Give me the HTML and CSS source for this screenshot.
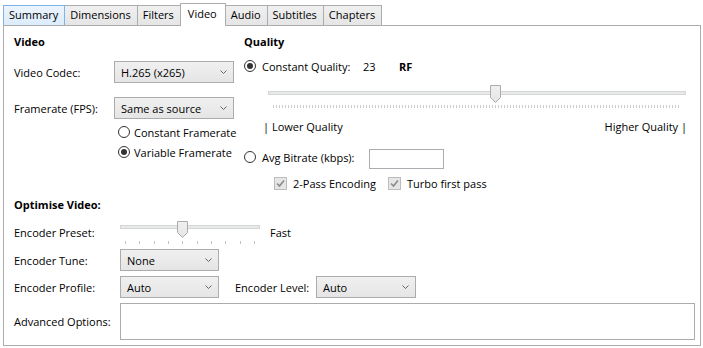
FILE: index.html
```html
<!DOCTYPE html>
<html>
<head>
<meta charset="utf-8">
<link rel="stylesheet" href="styles.css">
</head>
<body>
<div class="tabs">
  <div class="tab hover">Summary</div>
  <div class="tab">Dimensions</div>
  <div class="tab">Filters</div>
  <div class="tab active">Video</div>
  <div class="tab">Audio</div>
  <div class="tab">Subtitles</div>
  <div class="tab">Chapters</div>
</div>
<div class="panel">
  <div class="upper">
    <div class="col-video">
      <div class="heading">Video</div>
      <div class="field-row codec-row">
        <span class="lbl">Video Codec:</span>
        <div class="select w120"><span>H.265 (x265)</span><svg class="chev" width="7" height="4" viewBox="0 0 7 4"><polyline points="0.5,0.5 3.5,3.5 6.5,0.5" fill="none" stroke="#666" stroke-width="1"/></svg></div>
      </div>
      <div class="field-row fps-row">
        <span class="lbl">Framerate (FPS):</span>
        <div class="select w120"><span>Same as source</span><svg class="chev" width="7" height="4" viewBox="0 0 7 4"><polyline points="0.5,0.5 3.5,3.5 6.5,0.5" fill="none" stroke="#666" stroke-width="1"/></svg></div>
      </div>
      <div class="radio-row fr-first"><span class="radio"></span><span class="rtext-s">Constant Framerate</span></div>
      <div class="radio-row"><span class="radio on"></span><span class="rtext-s">Variable Framerate</span></div>
    </div>
    <div class="col-quality">
      <div class="heading">Quality</div>
      <div class="cq-row">
        <span class="radio on"></span><span class="rtext cq-label">Constant Quality:</span><span class="cq-val">23</span><span class="rf">RF</span>
      </div>
      <div class="slider q-slider">
        <div class="track"></div>
        <svg class="thumb q-thumb" width="11" height="18" viewBox="0 0 11 18"><defs><linearGradient id="tg" x1="0" y1="0" x2="0" y2="1"><stop offset="0" stop-color="#f0f0f0"/><stop offset="1" stop-color="#e5e5e5"/></linearGradient></defs><path d="M0.5 0.5 H10.5 V12.5 L5.5 17.5 L0.5 12.5 Z" fill="url(#tg)" stroke="#acacac"/></svg>
      </div>
      <div class="q-ticks"></div>
      <div class="q-labels"><span>| Lower Quality</span><span>Higher Quality |</span></div>
      <div class="ab-row">
        <span class="radio"></span><span class="rtext ab-label">Avg Bitrate (kbps):</span><span class="input"></span>
      </div>
      <div class="check-row">
        <span class="check-item"><span class="check"><svg width="11" height="11" viewBox="0 0 11 11"><polyline points="2,5.5 4.5,8 9,2.5" fill="none" stroke="#8a8a8a" stroke-width="1.6"/></svg></span><span>2-Pass Encoding</span></span>
        <span class="check-item"><span class="check"><svg width="11" height="11" viewBox="0 0 11 11"><polyline points="2,5.5 4.5,8 9,2.5" fill="none" stroke="#8a8a8a" stroke-width="1.6"/></svg></span><span>Turbo first pass</span></span>
      </div>
    </div>
  </div>
  <div class="optimise">
    <div class="heading">Optimise Video:</div>
    <div class="opt-row preset-row">
      <span class="lbl2">Encoder Preset:</span>
      <div class="slider p-slider">
        <div class="track"></div>
        <svg class="thumb p-thumb" width="11" height="17" viewBox="0 0 11 17"><defs><linearGradient id="tg2" x1="0" y1="0" x2="0" y2="1"><stop offset="0" stop-color="#f0f0f0"/><stop offset="1" stop-color="#e5e5e5"/></linearGradient></defs><path d="M0.5 0.5 H10.5 V11.5 L5.5 16.5 L0.5 11.5 Z" fill="url(#tg2)" stroke="#acacac"/></svg>
        <div class="p-ticks"><i></i><i></i><i></i><i></i><i></i><i></i><i></i><i></i><i></i><i></i></div>
      </div>
      <span class="fast">Fast</span>
    </div>
    <div class="opt-row tune-row">
      <span class="lbl2">Encoder Tune:</span>
      <div class="select w99"><span>None</span><svg class="chev" width="7" height="4" viewBox="0 0 7 4"><polyline points="0.5,0.5 3.5,3.5 6.5,0.5" fill="none" stroke="#666" stroke-width="1"/></svg></div>
    </div>
    <div class="opt-row profile-row">
      <span class="lbl2">Encoder Profile:</span>
      <div class="select w99"><span>Auto</span><svg class="chev" width="7" height="4" viewBox="0 0 7 4"><polyline points="0.5,0.5 3.5,3.5 6.5,0.5" fill="none" stroke="#666" stroke-width="1"/></svg></div>
      <span class="lvl-label">Encoder Level:</span>
      <div class="select w100"><span>Auto</span><svg class="chev" width="7" height="4" viewBox="0 0 7 4"><polyline points="0.5,0.5 3.5,3.5 6.5,0.5" fill="none" stroke="#666" stroke-width="1"/></svg></div>
    </div>
    <div class="opt-row adv-row">
      <span class="lbl2">Advanced Options:</span>
      <div class="textarea"></div>
    </div>
  </div>
</div>
</body>
</html>
```
FILE: styles.css
```css
* { box-sizing: border-box; }
body {
  margin: 0;
  background: #fff;
  font-family: "Open Sans", "Noto Sans", sans-serif;
  font-size: 11px;
  color: #000;
}
.tabs {
  display: flex;
  align-items: flex-end;
  height: 25px;
  padding-left: 3px;
}
.tab {
  height: 20px;
  line-height: 18px;
  padding: 0 6px 0 5px;
  border: 1px solid #acacac;
  border-bottom: none;
  background: linear-gradient(#f0f0f0, #e5e5e5);
  margin-left: -1px;
  white-space: nowrap;
}
.tab:first-child { margin-left: 0; }
.tab.hover {
  background: linear-gradient(#ecf4fc, #dcecfc);
  border-color: #7eb4ea;
  position: relative;
  z-index: 1;
}
.tab.active {
  height: 23px;
  line-height: 20px;
  background: #fff;
  position: relative;
  z-index: 2;
  margin-bottom: -1px;
  padding: 0 8px 0 7px;
}
.panel {
  margin-left: 3px;
  width: 698px;
  height: 321px;
  border: 1px solid #acacac;
  padding: 8px 4px 0 10px;
}
.upper { display: flex; }
.col-video { width: 230px; }
.col-quality { flex: 1; }
.heading {
  font-weight: 700;
  height: 16px;
  line-height: 16px;
}
.field-row { display: flex; align-items: center; }
.codec-row { margin-top: 11px; }
.fps-row { margin-top: 14px; }
.lbl { width: 100px; }
.select {
  height: 22px;
  border: 1px solid #acacac;
  background: linear-gradient(#f0f0f0, #e5e5e5);
  display: flex;
  align-items: center;
  justify-content: space-between;
  padding: 0 6px 0 6px;
}
.w120 { width: 120px; }
.w99 { width: 99px; }
.w100 { width: 100px; }
.radio {
  width: 12px;
  height: 12px;
  border: 1px solid #333;
  border-radius: 50%;
  background: #fff;
  display: flex;
  align-items: center;
  justify-content: center;
  flex: none;
}
.radio.on::after {
  content: "";
  width: 6px;
  height: 6px;
  border-radius: 50%;
  background: #333;
}
.rtext { margin-left: 6px; }
.rtext-s { margin-left: 4px; }
.radio-row {
  display: flex;
  align-items: center;
  height: 20px;
  padding-left: 104px;
}
.fr-first { margin-top: 3px; }
.cq-row {
  display: flex;
  align-items: center;
  height: 20px;
  margin-top: 6px;
}
.cq-label { width: 101px; }
.cq-val { width: 36px; }
.rf { font-weight: 700; }
.slider { position: relative; }
.track {
  position: absolute;
  left: 0;
  right: 0;
  height: 4px;
  background: #e7eaea;
  border: 1px solid #d6d6d6;
}
.thumb { position: absolute; top: 0; }
.q-slider {
  height: 18px;
  margin: 9px 10px 0 24px;
}
.q-slider .track { top: 6px; }
.q-thumb { left: 222px; }
.q-ticks {
  height: 3px;
  margin: 2px 15px 0 29px;
  background: repeating-linear-gradient(90deg, #cdcdcd 0 1px, transparent 1px 3px);
}
.q-labels {
  display: flex;
  justify-content: space-between;
  height: 16px;
  line-height: 16px;
  margin: 11px 9px 0 19px;
}
.ab-row {
  display: flex;
  align-items: center;
  height: 20px;
  margin-top: 12px;
}
.ab-label { width: 107px; }
.input {
  width: 75px;
  height: 20px;
  border: 1px solid #abadb3;
  background: #fff;
  margin-top: 4px;
}
.check-row {
  display: flex;
  align-items: center;
  gap: 12px;
  height: 18px;
  margin-top: 7px;
  padding-left: 30px;
}
.check-item { display: flex; align-items: center; }
.check {
  width: 13px;
  height: 13px;
  border: 1px solid #bcbcbc;
  background: #e6e6e6;
  margin-right: 6px;
  display: flex;
  align-items: center;
  justify-content: center;
}
.optimise { margin-top: 5px; }
.opt-row { display: flex; align-items: center; }
.lbl2 { width: 106px; flex: none; }
.preset-row { margin-top: 7px; height: 24px; }
.p-slider { width: 140px; height: 24px; }
.p-slider .track { top: 5px; }
.p-thumb { left: 57px; top: 1px; }
.p-ticks {
  position: absolute;
  left: 5px;
  right: 5px;
  top: 21px;
  height: 3px;
  display: flex;
  justify-content: space-between;
}
.p-ticks i {
  width: 1px;
  height: 3px;
  background: #c4c4c4;
}
.fast { margin-left: 10px; }
.tune-row { margin-top: 5px; }
.profile-row { margin-top: 5px; }
.lvl-label { margin-left: 16px; width: 81px; }
.adv-row { margin-top: 5px; }
.textarea {
  width: 575px;
  height: 37px;
  border: 1px solid #acacac;
  background: #fff;
}
```
